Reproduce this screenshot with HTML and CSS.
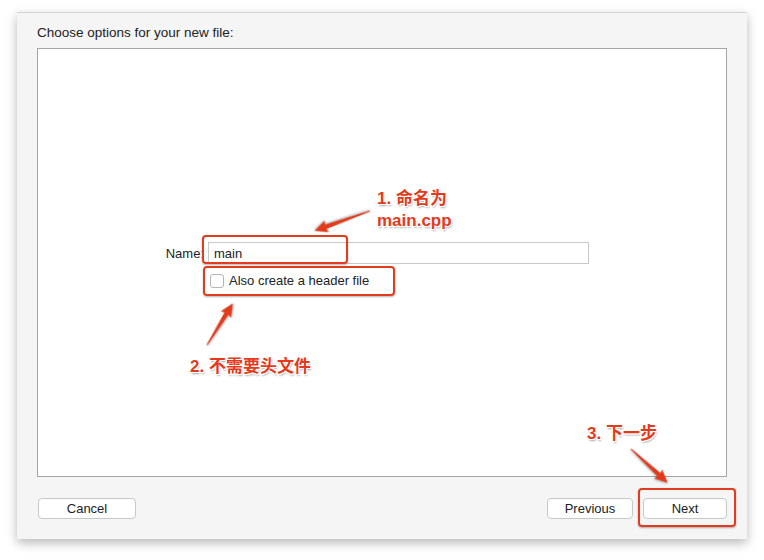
FILE: index.html
```html
<!DOCTYPE html>
<html lang="en">
<head>
    <meta charset="UTF-8">
    <meta name="viewport" content="width=device-width, initial-scale=1.0">
    <title>Choose options for your new file</title>
    <link rel="stylesheet" href="styles.css">
</head>
<body>

    <div class="dialog">
        <div class="title">Choose options for your new file:</div>
        <div class="panel">
            <div class="name-row">
                <label for="name">Name:</label>
                <input type="text" id="name" value="main">
            </div>
            <div class="check-row">
                <span class="checkbox"></span>
                <span>Also create a header file</span>
            </div>
        </div>
        <div class="buttons">
            <button class="btn btn-cancel">Cancel</button>
            <div class="spacer"></div>
            <button class="btn btn-prev">Previous</button>
            <button class="btn btn-next">Next</button>
        </div>
    </div>

    <!-- annotations drawn over the screenshot -->
    <div class="notes">
        <svg class="arrows" width="764" height="560" viewBox="0 0 764 560">
            <g class="arrow">
                <polygon transform="translate(370,211) rotate(160.3)" points="0,-0.6 47,-2.2 46,-6 59,0 46,6 47,2.2 0,0.6"/>
                <polygon transform="translate(207,345) rotate(-58.2)" points="0,-0.6 37,-2.2 36,-6 49,0 36,6 37,2.2 0,0.6"/>
                <polygon transform="translate(631,449) rotate(42.6)" points="0,-0.6 38,-2.2 37,-6 50,0 37,6 38,2.2 0,0.6"/>
            </g>
        </svg>
        <div class="mark mark-name"></div>
        <div class="mark mark-check"></div>
        <div class="mark mark-next"></div>
        <div class="note note-1">1. 命名为<br>main.cpp</div>
        <div class="note note-2">2. 不需要头文件</div>
        <div class="note note-3">3. 下一步</div>
    </div>

</body>
</html>
```

FILE: styles.css
```css
body {
    font-family: 'Liberation Sans', Arial, sans-serif;
    font-size: 13px;
    color: #222;
    background-color: #fff;
    margin: 0;
    position: relative;
    width: 764px;
    height: 560px;
    overflow: hidden;
}
.dialog {
    margin: 12px 0 0 17px;
    width: 730px;
    height: 527px;
    box-sizing: border-box;
    background-color: #f5f5f5;
    border-top: 1px solid #d2d2d2;
    box-shadow: 0 4px 10px rgba(0, 0, 0, 0.28);
    padding: 0 20px;
    display: flex;
    flex-direction: column;
}
.title {
    height: 35px;
    box-sizing: border-box;
    padding-top: 12px;
    line-height: 16px;
    font-size: 13.5px;
}
.panel {
    height: 429px;
    box-sizing: border-box;
    background-color: #fff;
    border: 1px solid #a5a5a5;
    padding-top: 193px;
}
.name-row {
    display: flex;
    align-items: center;
    padding-left: 82px;
}
.name-row label {
    width: 84px;
    text-align: right;
    margin-right: 4px;
}
.name-row input {
    width: 381px;
    height: 22px;
    box-sizing: border-box;
    border: 1px solid #c9c9c9;
    padding: 0 5px;
    font-family: inherit;
    font-size: 13px;
    color: #222;
    outline: none;
}
.check-row {
    display: flex;
    align-items: center;
    margin-top: 10px;
    padding-left: 172px;
    line-height: 14px;
}
.checkbox {
    width: 14px;
    height: 14px;
    box-sizing: border-box;
    border: 1px solid #b4b4b4;
    border-radius: 3px;
    background-color: #fff;
    margin-right: 5px;
}
.buttons {
    display: flex;
    padding: 21px 0 0 1px;
}
.spacer {
    flex: 1;
}
.btn {
    height: 21px;
    background-color: #fff;
    border: 1px solid #c8c8c8;
    border-radius: 4px;
    font-family: inherit;
    font-size: 13px;
    color: #222;
    padding: 0;
}
.btn-cancel {
    width: 98px;
}
.btn-prev {
    width: 86px;
    margin-right: 10px;
}
.btn-next {
    width: 84px;
}
.notes {
    position: absolute;
    left: 0;
    top: 0;
    width: 764px;
    height: 560px;
}
.arrows {
    position: absolute;
    left: 0;
    top: 0;
}
.arrow polygon {
    fill: #e43a1c;
    filter: drop-shadow(0 1px 1px rgba(0, 0, 0, 0.35));
}
.mark {
    position: absolute;
    border: 2px solid #e33b1d;
    border-radius: 4px;
    box-sizing: border-box;
    box-shadow: 0 1px 2px rgba(0, 0, 0, 0.3);
}
.mark-name {
    left: 202px;
    top: 235px;
    width: 146px;
    height: 29px;
}
.mark-check {
    left: 203px;
    top: 266px;
    width: 192px;
    height: 30px;
}
.mark-next {
    left: 638px;
    top: 488px;
    width: 98px;
    height: 39px;
}
.note {
    position: absolute;
    font-family: 'Liberation Sans', 'Noto Sans CJK SC', sans-serif;
    font-weight: bold;
    font-size: 17px;
    line-height: 22px;
    color: #e43a1c;
    white-space: nowrap;
    text-shadow: -1px -1px 0 #fff, 1px -1px 0 #fff, -1px 1px 0 #fff, 1px 1px 0 #fff,
                 0 -1px 0 #fff, 0 1px 0 #fff, -1px 0 0 #fff, 1px 0 0 #fff,
                 1px 2px 2px rgba(0, 0, 0, 0.35);
}
.note-1 {
    left: 377px;
    top: 188px;
}
.note-2 {
    left: 190px;
    top: 356px;
}
.note-3 {
    left: 587px;
    top: 423px;
}
```
